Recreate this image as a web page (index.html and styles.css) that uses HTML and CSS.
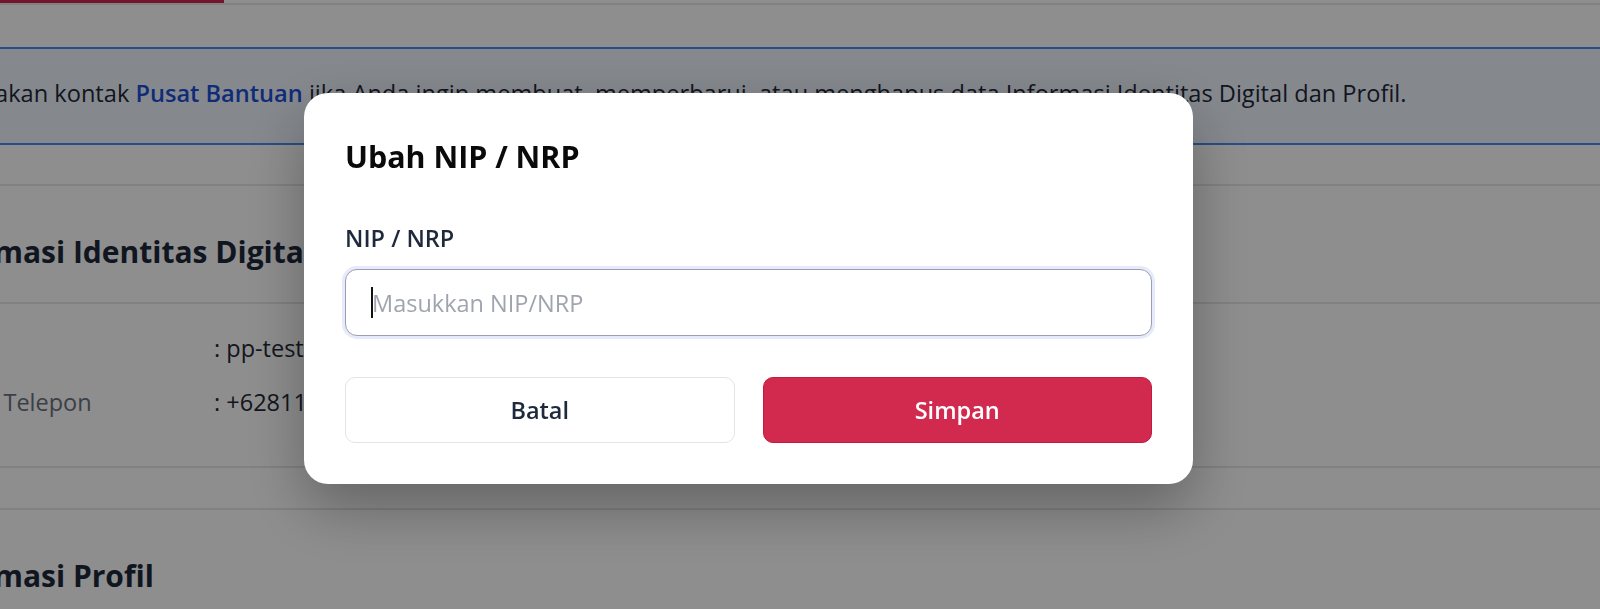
FILE: index.html
```html
<!DOCTYPE html>
<html>
	<head>
		<title>Ubah NIP / NRP</title>
		<link rel="stylesheet" href="styles.css">
	</head>
	<body>
		<div class="tabs"><div class="tab active"></div></div>
		<div id="main">
			<div class="alert">Gunakan kontak <a href="#">Pusat Bantuan</a> jika Anda ingin membuat, memperbarui, atau menghapus data Informasi Identitas Digital dan Profil.</div>
			<div class="card">
				<h2>Informasi Identitas Digital</h2>
				<div class="rows">
					<div class="row"><span class="key">Email</span><span class="val">: pp-test@mail.com</span></div>
					<div class="row"><span class="key">Nomor Telepon</span><span class="val">: +628110000000</span></div>
				</div>
			</div>
			<div class="card">
				<h2>Informasi Profil</h2>
			</div>
		</div>
		<div class="overlay">
			<div class="modal">
				<h1 id="title">Ubah NIP / NRP</h1>
				<label class="label" for="nip">NIP / NRP</label>
				<div class="field">
					<input type="text" id="nip" name="nip" placeholder="Masukkan NIP/NRP"/>
					<span class="caret"></span>
				</div>
				<div class="actions">
					<button type="button" class="cancel">Batal</button>
					<button type="button" class="save">Simpan</button>
				</div>
			</div>
		</div>
	</body>
</html>
```

FILE: styles.css
```css
* {
	box-sizing: border-box;
	font-family: "Open Sans", "Noto Sans", sans-serif;
}
html, body {
	margin: 0;
	height: 100%;
	overflow: hidden;
	background-color: white;
}
a {
	text-decoration: none;
	color: #1d4ed8;
	font-weight: 600;
}
.tabs {
	border-bottom: 2px solid #e5e7eb;
}
	.tab {
		height: 3px;
	}
	.tab.active {
		width: 224px;
		background-color: #d62552;
	}
#main {
	margin-left: -80px;
	color: #1f2937;
	font-size: 23.5px;
}
	.alert {
		margin-top: 42px;
		padding: 28px 0 34px 29px;
		font-size: 23.6px;
		line-height: 32px;
		background-color: #eff6ff;
		border-top: 2px solid #4a8af4;
		border-bottom: 2px solid #4a8af4;
		white-space: nowrap;
	}
	.card {
		margin-top: 39px;
		border-top: 2px solid #e5e7eb;
		border-bottom: 2px solid #e5e7eb;
	}
	.card + .card {
		margin-top: 40px;
	}
		.card h2 {
			margin: 0;
			padding: 47px 0 32px;
			font-size: 30px;
			line-height: 37px;
			font-weight: 700;
			color: #1e293b;
		}
		.rows {
			border-top: 2px solid #e5e7eb;
			padding: 28px 0 48px;
			display: flex;
			flex-direction: column;
			gap: 22px;
		}
			.row {
				display: flex;
				line-height: 32px;
			}
			.key {
				width: 294px;
				color: #6b7280;
			}
.overlay {
	position: fixed;
	top: 0;
	left: 0;
	right: 0;
	bottom: 0;
	background-color: rgba(0, 0, 0, 0.443);
}
	.modal {
		position: absolute;
		left: 304px;
		top: 93px;
		width: 889px;
		padding: 43px 41px 41px;
		background-color: white;
		border-radius: 24px;
		box-shadow: 0 24px 60px rgba(0, 0, 0, 0.3);
	}
		#title {
			margin: 0 0 46px;
			font-size: 30.4px;
			line-height: 41px;
			font-weight: 700;
			color: #0a0a0a;
		}
		.label {
			display: block;
			margin-bottom: 15px;
			font-size: 23.5px;
			line-height: 31px;
			font-weight: 600;
			color: #1e293b;
		}
		.field {
			position: relative;
		}
			input {
				display: block;
				width: 100%;
				height: 67px;
				padding: 0 0 0 26px;
				font-size: 23.5px;
				color: #1e293b;
				border: 1px solid #9a9eb2;
				border-radius: 12px;
				box-shadow: 0 0 0 3px #e6eafa;
				outline: none;
			}
			input::placeholder {
				color: #a0a4ad;
			}
			.caret {
				position: absolute;
				left: 26px;
				top: 18px;
				width: 1.5px;
				height: 31px;
				background-color: #111;
			}
		.actions {
			display: grid;
			grid-template-columns: 1fr 1fr;
			gap: 28px;
			margin-top: 41px;
		}
			button {
				height: 66px;
				font-size: 23.5px;
				font-weight: 600;
				border-radius: 10px;
				cursor: pointer;
			}
			.cancel {
				background-color: white;
				color: #1e293b;
				border: 1px solid #e2e4ea;
			}
			.save {
				background-color: #d12a4e;
				color: white;
				border: 1px solid #c41a42;
			}
```
